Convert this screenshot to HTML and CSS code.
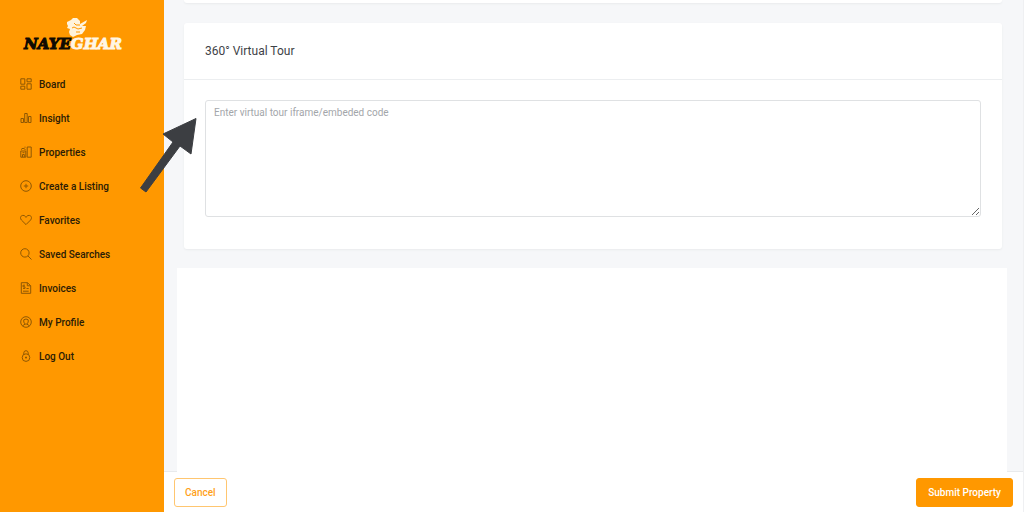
FILE: index.html
```html
<!DOCTYPE html>
<html lang="en">
<head>
<meta charset="utf-8">
<meta name="viewport" content="width=device-width, initial-scale=1">
<title>Nayeghar – Create a Listing</title>
<link rel="stylesheet" href="styles.css">
</head>
<body>
<div class="app">
  <aside class="sidebar">
    <a class="logo" href="#" aria-label="Nayeghar">
      <svg class="logo-mark" viewBox="0 0 22 20" aria-hidden="true">
        <path fill="#fff3dc" d="M1 5 L5 3 L7 1 L11 1 L14 4 L14 7 L21 3 L20 6 L16 9 L20 9 L19 13 L16 17 L11 18 L7 20 L4 18 L3 15 L4 12 L1 11 L2 9 L1 7 Z"/>
        <path fill="none" stroke="#ff9800" stroke-width="1" d="M8 6 L10 8 L14 8 M6 11 L8 10 L12 12 L16 11 M10 15 L14 15"/>
      </svg>
      <span class="logo-name"><span class="logo-dark">NAYE</span><span class="logo-light">GHAR</span></span>
    </a>
    <nav class="menu" aria-label="Main">
      <a class="menu-item" href="#"><svg class="icon" viewBox="0 0 12 12" aria-hidden="true"><path d="M.8 .8h4v5.4h-4zM.8 8.2h4v3h-4zM7 .8h4.2v3H7zM7 5.8h4.2v5.4H7z"/></svg>Board</a>
      <a class="menu-item" href="#"><svg class="icon" viewBox="0 0 12 12" aria-hidden="true"><path d="M1 10.500v-4h2.500v4zM4.700 10.500V1.500h2.500v9zM8.500 10.500V4.500h2.500v6z"/></svg>Insight</a>
      <a class="menu-item" href="#"><svg class="icon" viewBox="0 0 12 12" aria-hidden="true"><path d="M.8 11.2V5h5v6.2zM7.2 11.2V1h4v10.2zM2.5 11V8.500h1.800V11M1 3.500l2-1.300 2.500 1.300M2.500 6.700h2M4.500 1.200h1"/></svg>Properties</a>
      <a class="menu-item" href="#"><svg class="icon" viewBox="0 0 12 12" aria-hidden="true"><circle cx="6" cy="6" r="5.3"/><path d="M6 3.8v4.4M3.8 6h4.4"/></svg>Create a Listing</a>
      <a class="menu-item" href="#"><svg class="icon" viewBox="0 0 12 12" aria-hidden="true"><path d="M6 10.6 1.4 6C-.5 3.5 1 1.4 3 1.4 4.5 1.4 5.5 2.3 6 3.4c.5-1.1 1.5-2 3-2 2 0 3.5 2.1 1.6 4.6z"/></svg>Favorites</a>
      <a class="menu-item" href="#"><svg class="icon" viewBox="0 0 12 12" aria-hidden="true"><circle cx="4.9" cy="4.9" r="4.2"/><path d="m8 8 3.5 3.5"/></svg>Saved Searches</a>
      <a class="menu-item" href="#"><svg class="icon" viewBox="0 0 12 12" aria-hidden="true"><path d="M1.3 .7h6.2l3.2 3v7.6H1.3zM7.3 .8v3h3.2M5 3.2H3v1.6h2v1.6H3M6.5 6.5h2.2M3 9.2h5.7"/></svg>Invoices</a>
      <a class="menu-item" href="#"><svg class="icon" viewBox="0 0 12 12" aria-hidden="true"><circle cx="6" cy="6" r="5.3"/><path d="M3.8 3.8Q6 2.2 8.2 3.8V6Q7.8 8 6 8.3 4.2 8 3.8 6zM2.5 9.8 5 8.2M9.5 9.8 7 8.2"/></svg>My Profile</a>
      <a class="menu-item" href="#"><svg class="icon" viewBox="0 0 12 12" aria-hidden="true"><circle cx="6" cy="7.600" r="3.800"/><path d="M3.800 4.500V2.800Q4 .7 6 .7T8.200 2.800v1.700M6 6.500v2.200M5 7.500h2"/></svg>Log Out</a>
    </nav>
  </aside>

  <main class="main">
    <form class="form" id="listing">
      <div class="content">
        <section class="card card-previous"></section>
        <section class="card">
          <h2 class="card-title"><label for="tour">360° Virtual Tour</label></h2>
          <div class="card-body">
            <textarea class="tour-input" id="tour" placeholder="Enter virtual tour iframe/embeded code"></textarea>
          </div>
        </section>
      </div>
      <div class="blank-panel"></div>
      <footer class="actions">
        <button class="button button-outline" type="button">Cancel</button>
        <button class="button button-solid" type="submit">Submit Property</button>
      </footer>
    </form>
  </main>
</div>

<svg class="pointer" viewBox="0 0 60 78" aria-hidden="true">
  <path fill="#3c3e42" stroke="#3c3e42" stroke-width="1" stroke-linejoin="round" d="M57 3.500 L52 39 L41 31 L7 77 L1.500 73 L34 27 L24 19 Z"/>
</svg>
</body>
</html>
```
FILE: styles.css
```css
* {
  box-sizing: border-box;
}

body {
  margin: 0;
  font-family: Roboto, "Liberation Sans", sans-serif;
  font-size: 10px;
  background: #f6f7f9;
}

.app {
  display: flex;
  min-height: 100vh;
}

.sidebar {
  flex: 0 0 164px;
  background: #ff9800;
}

.logo {
  display: flex;
  flex-direction: column;
  align-items: center;
  padding: 17px 18px 0 0;
  text-decoration: none;
}

.logo-mark {
  width: 22px;
  height: 20px;
  margin-left: 8px;
}

.logo-name {
  font: italic bold 15px/16px "DejaVu Serif", serif;
  margin-top: -1px;
}

.logo-dark {
  color: #0f0a02;
  -webkit-text-stroke: 1px #0f0a02;
}

.logo-light {
  color: #fff6e6;
  -webkit-text-stroke: 1px #fff6e6;
}

.menu {
  display: flex;
  flex-direction: column;
  padding-top: 15px;
}

.menu-item {
  display: flex;
  align-items: center;
  gap: 7px;
  height: 34px;
  padding-left: 20px;
  color: #2b1c05;
  font-size: 10px;
  font-weight: 500;
  text-decoration: none;
}

.icon {
  width: 12px;
  height: 12px;
  fill: none;
  stroke: #8f5804;
  stroke-width: 1;
}

.main {
  flex: 1;
  min-width: 0;
  border-right: 1px solid #eff0f2;
}

.form {
  display: flex;
  flex-direction: column;
  min-height: 100vh;
}

.content {
  display: flex;
  flex-direction: column;
  gap: 20px;
  padding: 0 21px 19px 20px;
}

.card {
  background: #fff;
  border-radius: 3px;
  box-shadow: 0 1px 2px #e9ebed;
}

.card-previous {
  height: 3px;
  border-radius: 0 0 3px 3px;
}

.card-title {
  margin: 0;
  padding: 18px 21px;
  border-bottom: 1px solid #eceef0;
  color: #3e4247;
  font-size: 12px;
  font-weight: 400;
  line-height: 20px;
}

.card-body {
  padding: 20px 21px 32px;
}

.tour-input {
  display: block;
  width: 100%;
  height: 117px;
  padding: 5px 8px;
  border: 1px solid #dfe1e3;
  border-radius: 3px;
  background: #fff;
  color: #3e4247;
  font: inherit;
  line-height: 14px;
  resize: vertical;
}

.tour-input::placeholder {
  color: #a3a6aa;
}

.blank-panel {
  position: relative;
  flex: 1;
  margin: 0 16px -1px 13px;
  background: #fff;
}

.actions {
  display: flex;
  justify-content: space-between;
  align-items: center;
  padding: 6px 10px 5px;
  border-top: 1px solid #e8eaec;
  background: #fff;
}

.button {
  height: 29px;
  padding: 0 10px;
  border: 1px solid #ff9800;
  border-radius: 3px;
  font: 500 10px/14px Roboto, "Liberation Sans", sans-serif;
}

.button-outline {
  border-color: #ffc670;
  background: #fff;
  color: #ff9f1a;
}

.button-solid {
  padding: 0 11px;
  background: #ff9800;
  color: #fff;
}

.pointer {
  position: absolute;
  top: 115px;
  left: 139px;
  width: 60px;
  height: 78px;
  pointer-events: none;
}
```
